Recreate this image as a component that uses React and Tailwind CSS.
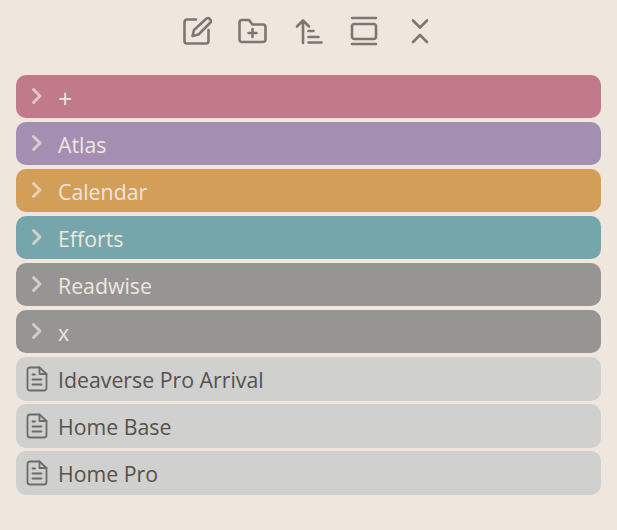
const folders = [
  { name: "+", bg: "bg-[#c07a8a]", text: "text-[25px] ml-[15px] mt-[5px]" },
  { name: "Atlas", bg: "bg-[#a48fb3]", text: "text-[21.3px] ml-[15px] mt-[2px]" },
  { name: "Calendar", bg: "bg-[#d39e57]", text: "text-[21.3px] ml-[15px] mt-[2px]" },
  { name: "Efforts", bg: "bg-[#74a6ac]", text: "text-[21.3px] ml-[15px] mt-[2px]" },
  { name: "Readwise", bg: "bg-[#969593]", text: "text-[21.3px] ml-[15px] mt-[2px]" },
  { name: "x", bg: "bg-[#969593]", text: "text-[21.3px] ml-[15px] mt-[2px]" },
];
const files = ["Ideaverse Pro Arrival", "Home Base", "Home Pro"];

const S = { fill: "none", stroke: "#7b7874", strokeWidth: 2.6, strokeLinecap: "round", strokeLinejoin: "round" };

function Tool({ children }) {
  return <div className="w-[55.6px] flex justify-center items-center">{children}</div>;
}

function Toolbar() {
  return (
    <div className="flex justify-center items-center h-[30px] mt-[16px]">
      <Tool>
        <svg width="29" height="30" viewBox="0 0 29 30" {...S}>
          <path d="M13 3.500H4a2.500 2.500 0 0 0-2.500 2.500v19A2.500 2.500 0 0 0 4 27.500h19a2.500 2.500 0 0 0 2.500-2.500v-11" />
          <path d="M23.500 2.500a3 3 0 0 1 4 4L15.500 18.500l-6 1.500 1.500-6z" />
        </svg>
      </Tool>
      <Tool>
        <svg width="29" height="30" viewBox="0 0 29 30" {...S}>
          <path d="M4 4h7l3.500 4.500H25a2.500 2.500 0 0 1 2.500 2.500v12.500A2.500 2.500 0 0 1 25 26H4a2.500 2.500 0 0 1-2.500-2.500V6.500A2.500 2.500 0 0 1 4 4z" />
          <path d="M14.500 13v8M10.500 17h8" />
        </svg>
      </Tool>
      <Tool>
        <svg width="29" height="30" viewBox="0 0 29 30" {...S}>
          <path d="M9 27V4.500M3 10.500l6-6 6 6" />
          <path d="M14.500 15h5M14.500 21h10M14.500 26.500h13" />
        </svg>
      </Tool>
      <Tool>
        <svg width="28" height="30" viewBox="0 0 28 30" {...S}>
          <path d="M2 2h24M2 28h24" />
          <rect x="2" y="8" width="24" height="15" rx="2.500" />
        </svg>
      </Tool>
      <Tool>
        <svg width="20" height="30" viewBox="0 0 20 30" {...S}>
          <path d="M3 4.500l7 7 7-7M3 26l7-7 7 7" />
        </svg>
      </Tool>
    </div>
  );
}

function Chevron() {
  return (
    <svg width="12" height="18" viewBox="0 0 12 18" fill="none" stroke="#ecdfdc" strokeOpacity="0.75" strokeWidth="3" strokeLinecap="round" strokeLinejoin="round" className="-mt-[1px] shrink-0">
      <path d="M2.500 2.500L9 9l-6.500 6.500" />
    </svg>
  );
}

function FileIcon() {
  return (
    <svg width="22" height="26" viewBox="0 0 22 26" fill="none" stroke="#6d6b69" strokeWidth="1.800" strokeLinecap="round" strokeLinejoin="round" className="shrink-0">
      <path d="M13.500 1.500H4a2.500 2.500 0 0 0-2.500 2.500v18A2.500 2.500 0 0 0 4 24.500h14a2.500 2.500 0 0 0 2.500-2.500V8z" />
      <path d="M13.500 1.500V8h7M6.500 8.500h2.500M6.500 13.500h9M6.500 18.500h9" />
    </svg>
  );
}

export default function App() {
  return (
    <div className="w-[617px] h-[530px] bg-[#efe6dd] overflow-hidden font-['Open_Sans','Noto_Sans',sans-serif]">
      <Toolbar />
      <div className="mt-[29px] mx-[16px] flex flex-col gap-[4px]">
        {folders.map((f) => (
          <div key={f.name} className={`h-[43px] rounded-[10px] flex items-center ${f.bg} text-[#efe6dd] pl-[15px]`}>
            <Chevron />
            <span className={f.text}>{f.name}</span>
          </div>
        ))}
        {files.map((f) => (
          <div key={f} className="h-[44px] -mb-[1px] rounded-[10px] flex items-center bg-[#d0d0ce] text-[#55524f] text-[21.3px] pl-[10px]">
            <FileIcon />
            <span className="ml-[10px] mt-[1px]">{f}</span>
          </div>
        ))}
      </div>
    </div>
  );
}
